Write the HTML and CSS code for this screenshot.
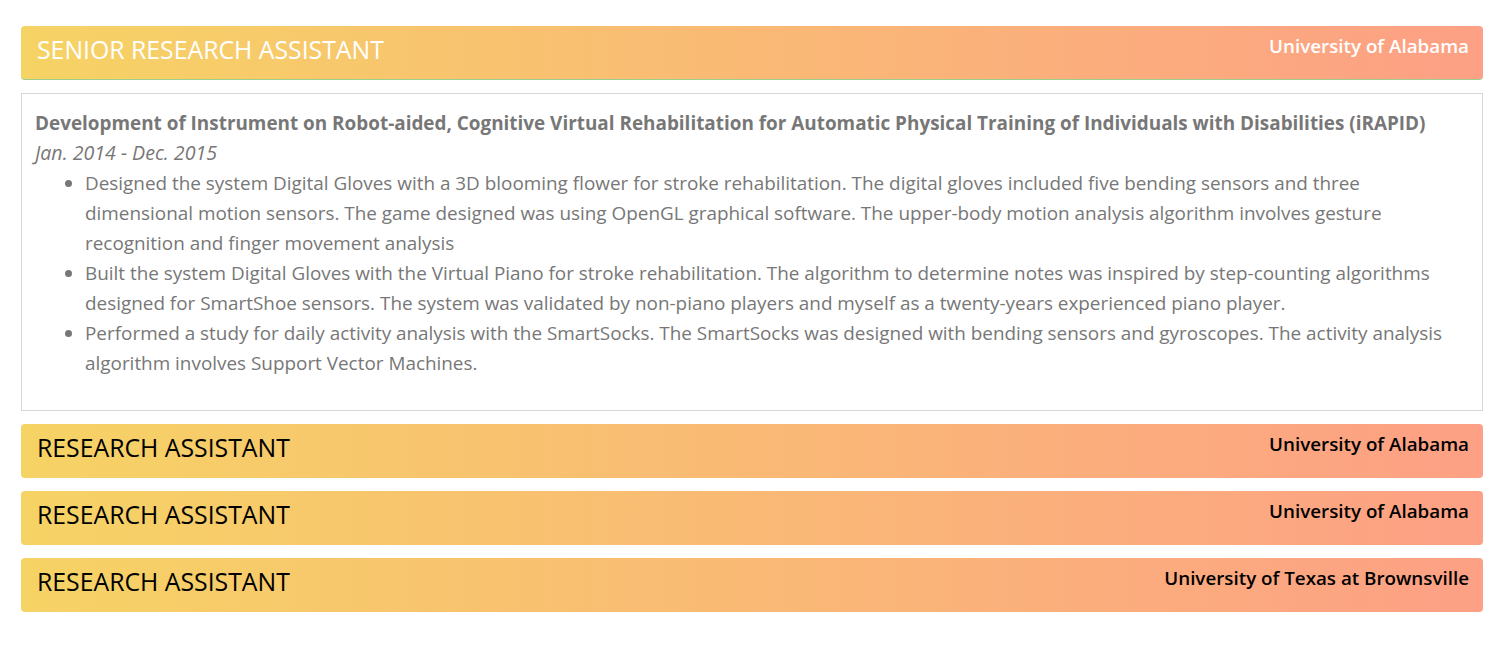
FILE: index.html
```html
<!DOCTYPE html>
<html lang="en">
<head>
<meta charset="utf-8">
<title>Experience</title>
<link rel="stylesheet" href="styles.css">
</head>
<body>
<div class="container">
  <div class="job">
    <div class="job-head job-head--open">
      <h3 class="job-title">SENIOR RESEARCH ASSISTANT</h3>
      <h5 class="job-org">University of Alabama</h5>
    </div>
    <div class="job-body">
      <div class="proj-title">Development of Instrument on Robot-aided, Cognitive Virtual Rehabilitation for Automatic Physical Training of Individuals with Disabilities (iRAPID)</div>
      <div class="proj-date">Jan. 2014 - Dec. 2015</div>
      <ul class="proj-list">
        <li>Designed the system Digital Gloves with a 3D blooming flower for stroke rehabilitation. The digital gloves included five bending sensors and three dimensional motion sensors. The game designed was using OpenGL graphical software. The upper-body motion analysis algorithm involves gesture recognition and finger movement analysis</li>
        <li>Built the system Digital Gloves with the Virtual Piano for stroke rehabilitation. The algorithm to determine notes was inspired by step-counting algorithms designed for SmartShoe sensors. The system was validated by non-piano players and myself as a twenty-years experienced piano player.</li>
        <li>Performed a study for daily activity analysis with the SmartSocks. The SmartSocks was designed with bending sensors and gyroscopes. The activity analysis algorithm involves Support Vector Machines.</li>
      </ul>
    </div>
  </div>
  <div class="job">
    <div class="job-head">
      <h3 class="job-title">RESEARCH ASSISTANT</h3>
      <h5 class="job-org">University of Alabama</h5>
    </div>
  </div>
  <div class="job">
    <div class="job-head">
      <h3 class="job-title">RESEARCH ASSISTANT</h3>
      <h5 class="job-org">University of Alabama</h5>
    </div>
  </div>
  <div class="job">
    <div class="job-head">
      <h3 class="job-title">RESEARCH ASSISTANT</h3>
      <h5 class="job-org">University of Texas at Brownsville</h5>
    </div>
  </div>
</div>
</body>
</html>
```
FILE: styles.css
```css
* { box-sizing: border-box; }
html, body { margin: 0; padding: 0; background: #fff; }
body {
  font-family: "Open Sans", "Noto Sans", Arial, sans-serif;
  color: #777;
}
.container {
  width: 1462px;
  margin-left: 21px;
  padding-top: 26px;
  display: flex;
  flex-direction: column;
  gap: 13px;
}
.job { display: flex; flex-direction: column; gap: 13px; }
.job-head {
  height: 54px;
  padding: 0 14px 0 16px;
  border-radius: 4px;
  background: linear-gradient(to right, #f6d365, #fda085);
  display: flex;
  justify-content: space-between;
  align-items: flex-start;
  color: #000;
}
.job-head--open {
  color: #fff;
  border-bottom: 1px solid #9dcf8c;
}
.job-title {
  margin: 0;
  padding-top: 8px;
  font-size: 24.8px;
  font-weight: 400;
  line-height: 30px;
}
.job-org {
  margin: 0;
  padding-top: 8px;
  font-size: 18.8px;
  font-weight: 600;
  line-height: 24px;
}
.job-body {
  border: 1px solid #d6d6d6;
  padding: 14px 14px 16px 13px;
  font-size: 18.9px;
  line-height: 30px;
}
.proj-title { font-weight: 700; }
.proj-date { font-style: italic; font-size: 19.6px; }
.proj-list { margin: 0 0 16px 0; padding-left: 50px; }
```
